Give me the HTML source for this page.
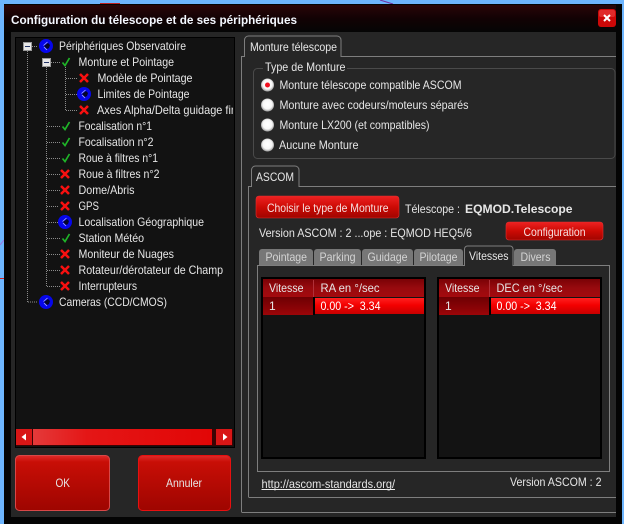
<!DOCTYPE html>
<html><head><meta charset="utf-8">
<style>
html,body{margin:0;padding:0;background:#6db5fe;width:624px;height:524px;overflow:hidden}
svg{display:block;position:absolute;left:0;top:0}
text{font-family:"Liberation Sans",sans-serif;font-size:12px;fill:#e6e6e6;white-space:pre}
.l{stroke:#7e7e7e;stroke-width:1;fill:none;shape-rendering:crispEdges}
.d{stroke:#8c8c8c;stroke-width:1;stroke-dasharray:1 1;fill:none;shape-rendering:crispEdges}
</style></head><body>
<svg width="624" height="524" viewBox="0 0 624 524" xmlns="http://www.w3.org/2000/svg">
<defs>
<linearGradient id="title" x1="0" y1="0" x2="0" y2="1"><stop offset="0" stop-color="#2a0508"/><stop offset=".5" stop-color="#120204"/><stop offset="1" stop-color="#050505"/></linearGradient>
<linearGradient id="btn" x1="0" y1="0" x2="0" y2="1"><stop offset="0" stop-color="#e02a2a"/><stop offset=".12" stop-color="#c80e06"/><stop offset="1" stop-color="#9e0500"/></linearGradient>
<linearGradient id="btn2" x1="0" y1="0" x2="0" y2="1"><stop offset="0" stop-color="#e22"/><stop offset=".5" stop-color="#cc0a04"/><stop offset="1" stop-color="#a00500"/></linearGradient>
<linearGradient id="hdr" x1="0" y1="0" x2="0" y2="1"><stop offset="0" stop-color="#7a0206"/><stop offset=".5" stop-color="#980a0e"/><stop offset="1" stop-color="#a30a0e"/></linearGradient>
<linearGradient id="cell" x1="0" y1="0" x2="0" y2="1"><stop offset="0" stop-color="#6e0003"/><stop offset="1" stop-color="#9c0508"/></linearGradient>
<linearGradient id="sel" x1="0" y1="0" x2="0" y2="1"><stop offset="0" stop-color="#ff2020"/><stop offset=".45" stop-color="#f40000"/><stop offset="1" stop-color="#c80000"/></linearGradient>
<linearGradient id="sb" x1="0" y1="0" x2="1" y2="0"><stop offset="0" stop-color="#e43a3a"/><stop offset=".3" stop-color="#e41616"/><stop offset="1" stop-color="#e20606"/></linearGradient>
<radialGradient id="rad" cx=".5" cy=".45" r=".55"><stop offset="0" stop-color="#fff"/><stop offset=".65" stop-color="#f6f6f6"/><stop offset="1" stop-color="#999"/></radialGradient>
<g id="globe"><circle r="7" fill="#0606ec"/><path d="M-2 0 L2-3 L4-1 L3 2 L1 3Z" fill="#050528"/><path d="M-2.5-.5 L1.5-4 M-2 1 L1 4" stroke="#a8b0ff" stroke-width=".8" fill="none"/></g>
<path id="x" d="M-4-4 L4 4 M4-4 L-4 4" stroke="#f81010" stroke-width="2.5" fill="none"/>
<path id="c" d="M-3.5 .5 L-1 3.5 L3.5-4" stroke="#1fb428" stroke-width="1.7" fill="none"/>
<g id="exp"><rect x=".5" y=".5" width="8" height="8" fill="#e8e8e8" stroke="#999" shape-rendering="crispEdges"/><rect x="2" y="4" width="5" height="1" fill="#223366" shape-rendering="crispEdges"/></g>
</defs>

<!-- desktop artefacts -->
<rect x="100" y="3" width="20" height="1" fill="#c02020"/>
<path d="M380 0 L393 4" stroke="#7030a0" fill="none"/>
<rect x="0" y="278" width="4" height="1" fill="#d02020"/>
<path d="M0 245 L4 240" stroke="#a070e0" fill="none"/>

<!-- window -->
<rect x="4" y="4" width="618" height="520" fill="#040404"/>
<rect x="4" y="5" width="612" height="27" fill="url(#title)"/>
<rect x="11" y="32" width="605" height="485" fill="#262626"/>
<text x="11" y="24" textLength="286" lengthAdjust="spacingAndGlyphs" style="font-weight:bold;font-size:12px;fill:#f4f8ff">Configuration du télescope et de ses périphériques</text>

<!-- close -->
<rect x="598" y="9" width="18" height="18" rx="3" fill="#cc0808"/>
<rect x="599" y="10" width="16" height="7" rx="2" fill="#e02a2a"/>
<path d="M604 15 L610 21 M610 15 L604 21" stroke="#fff" stroke-width="2" fill="none"/>

<!-- tree -->
<rect x="15" y="37" width="220" height="411" fill="#000"/>
<rect x="16" y="38" width="218" height="409" fill="#121212"/>
<g>
<path class="d" d="M27.5 51V302M28 302H38M32 46.5H38M46.5 67V286M51 62.5H60M65.5 67V110M66 78.5H78M66 94.5H78M66 110.5H78M47 126.5H60M47 142.5H60M47 158.5H60M47 174.5H60M47 190.5H60M47 206.5H58M47 222.5H58M47 238.5H60M47 254.5H60M47 270.5H60M47 286.5H60"/>
<use href="#exp" x="23" y="42"/><use href="#exp" x="42" y="58"/>
<use href="#globe" x="46" y="46"/>
<use href="#c" x="66" y="62"/>
<use href="#x" x="84" y="78"/>
<use href="#globe" x="84" y="94"/>
<use href="#x" x="84" y="110"/>
<use href="#c" x="66" y="126"/><use href="#c" x="66" y="142"/><use href="#c" x="66" y="158"/>
<use href="#x" x="65" y="174"/><use href="#x" x="65" y="190"/><use href="#x" x="65" y="206"/>
<use href="#globe" x="65" y="222"/>
<use href="#c" x="66" y="238"/>
<use href="#x" x="65" y="254"/><use href="#x" x="65" y="270"/><use href="#x" x="65" y="286"/>
<use href="#globe" x="46" y="302"/>
</g>
<text x="59" y="50" textLength="127" lengthAdjust="spacingAndGlyphs">Périphériques Observatoire</text>
<text x="78.5" y="66" textLength="95.5" lengthAdjust="spacingAndGlyphs">Monture et Pointage</text>
<text x="97.5" y="82" textLength="95" lengthAdjust="spacingAndGlyphs">Modèle de Pointage</text>
<text x="97.5" y="98" textLength="92" lengthAdjust="spacingAndGlyphs">Limites de Pointage</text>
<svg x="90" y="100" width="143" height="20"><text x="7" y="14" textLength="140" lengthAdjust="spacingAndGlyphs">Axes Alpha/Delta guidage fin</text></svg>
<text x="78.5" y="130" textLength="73.5" lengthAdjust="spacingAndGlyphs">Focalisation n°1</text>
<text x="78.5" y="146" textLength="75" lengthAdjust="spacingAndGlyphs">Focalisation n°2</text>
<text x="78.5" y="162" textLength="79.5" lengthAdjust="spacingAndGlyphs">Roue à filtres n°1</text>
<text x="78.5" y="178" textLength="81" lengthAdjust="spacingAndGlyphs">Roue à filtres n°2</text>
<text x="78.5" y="194" textLength="56" lengthAdjust="spacingAndGlyphs">Dome/Abris</text>
<text x="78.5" y="210" textLength="20.5" lengthAdjust="spacingAndGlyphs">GPS</text>
<text x="78.5" y="226" textLength="125.5" lengthAdjust="spacingAndGlyphs">Localisation Géographique</text>
<text x="78.5" y="242" textLength="65.5" lengthAdjust="spacingAndGlyphs">Station Météo</text>
<text x="78.5" y="258" textLength="95.5" lengthAdjust="spacingAndGlyphs">Moniteur de Nuages</text>
<text x="78.5" y="274" textLength="144.5" lengthAdjust="spacingAndGlyphs">Rotateur/dérotateur de Champ</text>
<text x="78.5" y="290" textLength="58.5" lengthAdjust="spacingAndGlyphs">Interrupteurs</text>
<text x="59" y="306" textLength="108" lengthAdjust="spacingAndGlyphs">Cameras (CCD/CMOS)</text>

<!-- scrollbar -->
<rect x="16" y="429" width="217" height="17" fill="#3a0404"/>
<rect x="16" y="429" width="16" height="16" fill="#d81616"/><rect x="216" y="429" width="16" height="16" fill="#d81616"/>
<rect x="33" y="429" width="179" height="16" fill="url(#sb)"/>
<path d="M26 433.5V440.5L21.5 437Z" fill="#fff"/><path d="M223 433.5V440.5L227.5 437Z" fill="#fff"/>

<!-- OK / Annuler -->
<rect x="15.5" y="455.5" width="94" height="55" rx="4" fill="url(#btn)" stroke="#d84848"/>
<rect x="138.5" y="455.5" width="92" height="55" rx="4" fill="url(#btn)" stroke="#e81010"/>
<text x="55.5" y="487" textLength="14.5" lengthAdjust="spacingAndGlyphs">OK</text>
<text x="166" y="487" textLength="36" lengthAdjust="spacingAndGlyphs">Annuler</text>

<!-- outer tab page -->
<path class="l" d="M241.5 512V56.5H244.5M341.5 56.5H616M241.5 512.5H616"/>
<path d="M244.5 57V40a4 4 0 0 1 4-4H337a4 4 0 0 1 4 4V57" fill="#262626" stroke="#7e7e7e"/>
<text x="250" y="51" textLength="87" lengthAdjust="spacingAndGlyphs">Monture télescope</text>

<!-- group -->
<rect x="253.5" y="68.5" width="361.5" height="90" rx="4" fill="none" stroke="#4a4a4a"/>
<rect x="263" y="62" width="84" height="12" fill="#262626"/>
<text x="265" y="71" textLength="80.5" lengthAdjust="spacingAndGlyphs">Type de Monture</text>
<circle cx="267.5" cy="85" r="6.5" fill="url(#rad)"/><circle cx="267.5" cy="85" r="2.5" fill="#f01020"/>
<circle cx="267.5" cy="105" r="6.5" fill="url(#rad)"/>
<circle cx="267.5" cy="125" r="6.5" fill="url(#rad)"/>
<circle cx="267.5" cy="145" r="6.5" fill="url(#rad)"/>
<text x="279.5" y="89" textLength="182" lengthAdjust="spacingAndGlyphs">Monture télescope compatible ASCOM</text>
<text x="279.5" y="109" textLength="189" lengthAdjust="spacingAndGlyphs">Monture avec codeurs/moteurs séparés</text>
<text x="279.5" y="129" textLength="150" lengthAdjust="spacingAndGlyphs">Monture LX200 (et compatibles)</text>
<text x="279" y="149" textLength="79.5" lengthAdjust="spacingAndGlyphs">Aucune Monture</text>

<!-- ascom page -->
<path class="l" d="M248.5 497V186.5H251.5M299 186.5H616M248.5 497.5H616"/>
<path d="M251.5 187V170a4 4 0 0 1 4-4H295a4 4 0 0 1 4 4V187" fill="#262626" stroke="#7e7e7e"/>
<text x="256" y="181" textLength="38" lengthAdjust="spacingAndGlyphs">ASCOM</text>

<rect x="256" y="196" width="143" height="22" rx="3" fill="url(#btn2)" stroke="#e03030" stroke-width=".6"/>
<text x="267" y="212" textLength="121.5" lengthAdjust="spacingAndGlyphs" style="fill:#f6e0e0">Choisir le type de Monture</text>
<text x="405" y="213" textLength="55" lengthAdjust="spacingAndGlyphs">Télescope :</text>
<text x="465" y="213" textLength="107.5" lengthAdjust="spacingAndGlyphs" style="font-weight:bold">EQMOD.Telescope</text>
<text x="259" y="237" textLength="213" lengthAdjust="spacingAndGlyphs">Version ASCOM : 2 ...ope : EQMOD HEQ5/6</text>
<rect x="506" y="222" width="97" height="18" rx="3" fill="url(#btn2)" stroke="#e03030" stroke-width=".6"/>
<text x="523.5" y="236" textLength="62" lengthAdjust="spacingAndGlyphs" style="fill:#f6e0e0">Configuration</text>

<!-- inner tabs -->
<path d="M259 265V252a3 3 0 0 1 3-3H310a3 3 0 0 1 3 3V265Z" fill="#777"/>
<path d="M314 265V252a3 3 0 0 1 3-3H358a3 3 0 0 1 3 3V265Z" fill="#777"/>
<path d="M362 265V252a3 3 0 0 1 3-3H410a3 3 0 0 1 3 3V265Z" fill="#777"/>
<path d="M414 265V252a3 3 0 0 1 3-3H460a3 3 0 0 1 3 3V265Z" fill="#777"/>
<path d="M514 265V252a3 3 0 0 1 3-3H553a3 3 0 0 1 3 3V265Z" fill="#777"/>
<rect x="257.5" y="265.5" width="352" height="206" fill="none" class="l"/>
<path d="M464.5 266V249a3 3 0 0 1 3-3H510a3 3 0 0 1 3 3V266" fill="#262626" stroke="#7e7e7e"/>
<text x="265.5" y="261" textLength="41.5" lengthAdjust="spacingAndGlyphs" style="fill:#d4d4d4">Pointage</text>
<text x="319.5" y="261" textLength="36" lengthAdjust="spacingAndGlyphs" style="fill:#d4d4d4">Parking</text>
<text x="367.5" y="261" textLength="40" lengthAdjust="spacingAndGlyphs" style="fill:#d4d4d4">Guidage</text>
<text x="419.5" y="261" textLength="38" lengthAdjust="spacingAndGlyphs" style="fill:#d4d4d4">Pilotage</text>
<text x="469" y="260" textLength="39.5" lengthAdjust="spacingAndGlyphs">Vitesses</text>
<text x="520.5" y="261" textLength="30" lengthAdjust="spacingAndGlyphs" style="fill:#d4d4d4">Divers</text>

<!-- grid 1 -->
<rect x="261" y="277" width="165" height="182" fill="#000"/>
<rect x="263" y="279" width="161" height="178" fill="#131313"/>
<rect x="263" y="279" width="161" height="18" fill="url(#hdr)"/>
<rect x="313" y="280" width="1" height="17" fill="#b03038"/>
<rect x="263" y="297" width="50" height="18" fill="url(#cell)"/>
<rect x="313" y="297" width="2" height="18" fill="#000"/>
<rect x="315" y="298" width="109" height="16" fill="url(#sel)"/>
<text x="269" y="292" textLength="34.5" lengthAdjust="spacingAndGlyphs">Vitesse</text>
<text x="320.5" y="292" textLength="59" lengthAdjust="spacingAndGlyphs">RA en °/sec</text>
<text x="269" y="310">1</text>
<text x="320.5" y="310" textLength="60" lengthAdjust="spacingAndGlyphs" style="fill:#fff">0.00 -&gt;  3.34</text>

<!-- grid 2 -->
<rect x="437" y="277" width="165" height="182" fill="#000"/>
<rect x="439" y="279" width="161" height="178" fill="#131313"/>
<rect x="439" y="279" width="161" height="18" fill="url(#hdr)"/>
<rect x="489" y="280" width="1" height="17" fill="#b03038"/>
<rect x="439" y="297" width="50" height="18" fill="url(#cell)"/>
<rect x="489" y="297" width="2" height="18" fill="#000"/>
<rect x="491" y="298" width="109" height="16" fill="url(#sel)"/>
<text x="445" y="292" textLength="34.5" lengthAdjust="spacingAndGlyphs">Vitesse</text>
<text x="496.5" y="292" textLength="66" lengthAdjust="spacingAndGlyphs">DEC en °/sec</text>
<text x="445" y="310">1</text>
<text x="496.5" y="310" textLength="60" lengthAdjust="spacingAndGlyphs" style="fill:#fff">0.00 -&gt;  3.34</text>

<!-- footer -->
<text x="261.5" y="488" textLength="133.5" lengthAdjust="spacingAndGlyphs">http://ascom-standards.org/</text>
<rect x="261.5" y="489" width="133.5" height="1" fill="#ececec"/>
<text x="510" y="486" textLength="91.5" lengthAdjust="spacingAndGlyphs">Version ASCOM : 2</text>
</svg>
</body></html>
